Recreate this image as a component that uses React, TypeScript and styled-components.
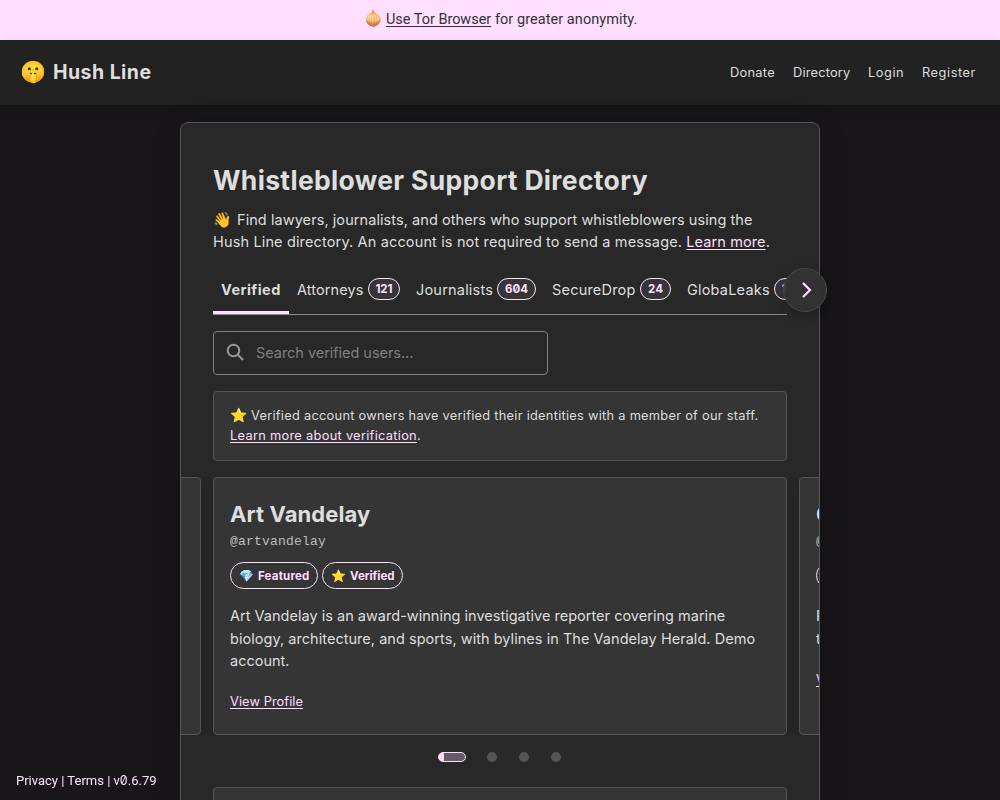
import React from "react";
import styled, { createGlobalStyle } from "styled-components";

const sans = `Inter, Roboto, "Liberation Sans", sans-serif`;

const Global = createGlobalStyle`
  * { box-sizing: border-box; }
  html, body { margin: 0; height: 800px; overflow: hidden; }
  body { background: #181619; color: #dedede; font-family: ${sans}; font-size: 14.5px; font-feature-settings: "zero"; }
  h1, h2, p { margin: 0; }
`;

const Page = styled.div`
  display: flex;
  flex-direction: column;
  height: 800px;
  overflow: hidden;
`;

const T = styled.span<{ $ls?: number; $w?: number }>`
  white-space: pre;
  letter-spacing: ${(p) => p.$ls ?? 0}px;
  ${(p) => (p.$w ? `display: inline-block; width: ${p.$w}px;` : "")}
`;

const Link = styled.a`
  color: #ffdfff;
  text-decoration: underline;
  text-decoration-thickness: 1px;
  text-underline-offset: 2px;
`;

const Banner = styled.div`
  height: 40px;
  flex: none;
  padding: 0 0 2px 364px;
  display: flex;
  align-items: center;
  background: #ffdfff;
  color: #333;
  font-family: Roboto, sans-serif;
  font-size: 14.5px;
  white-space: pre;
  ${Link} { color: #333; }
`;

const Emoji = styled.span<{ $size: number; $w: number }>`
  display: inline-block;
  width: ${(p) => p.$w}px;
  font-size: ${(p) => p.$size}px;
  line-height: 1;
  letter-spacing: 0;
`;

const Header = styled.header`
  height: 65px;
  flex: none;
  padding: 0 24px 0 20px;
  display: flex;
  align-items: center;
  justify-content: space-between;
  background: #222;
  box-shadow: 0 4px 12px rgba(0, 0, 0, 0.12);
`;

const Logo = styled.div`
  display: flex;
  align-items: center;
  padding-bottom: 2px;
  font-size: 19.5px;
  font-weight: 700;
`;

const Nav = styled.nav`
  display: flex;
  gap: 18px;
  font-size: 12.8px;
`;

const Panel = styled.main`
  width: 640px;
  height: 760px;
  flex: none;
  margin: 17px auto 0;
  padding: 40px 32px 0;
  border: 1px solid #555;
  border-radius: 8px;
  background: #282828;
  box-shadow: 0 4px 24px rgba(0, 0, 0, 0.25);
`;

const Title = styled.h1`
  height: 35px;
  line-height: 35px;
  font-size: 26.5px;
`;

const Intro = styled.p`
  margin-top: 11px;
  line-height: 22.4px;
`;

const TabsWrap = styled.div`
  position: relative;
  margin-top: 11px;
`;

const Tabs = styled.div`
  display: flex;
  height: 50px;
  overflow: hidden;
  border-bottom: 1px solid #888;
`;

const Tab = styled.div<{ $active?: boolean }>`
  flex: none;
  display: flex;
  align-items: center;
  padding: 3px 8px 0;
  border-bottom: 3px solid ${(p) => (p.$active ? "#ffdfff" : "transparent")};
  font-weight: ${(p) => (p.$active ? 700 : 400)};
`;

const Count = styled.span<{ $w: number }>`
  flex: none;
  width: ${(p) => p.$w}px;
  height: 22px;
  margin-left: 4px;
  border: 1px solid #ffdfff;
  border-radius: 11px;
  background: #353535;
  color: #ffdfff;
  font-size: 11.5px;
  font-weight: 700;
  line-height: 21px;
  text-align: center;
`;

const Next = styled.button`
  position: absolute;
  right: -40px;
  top: 3px;
  width: 44px;
  height: 44px;
  padding: 0;
  display: grid;
  place-items: center;
  border: 1px solid #484848;
  border-radius: 50%;
  background: rgba(51, 51, 51, 0.95);
  box-shadow: 0 4px 12px rgba(0, 0, 0, 0.2);
`;

const Search = styled.div`
  width: 335px;
  height: 44px;
  margin-top: 16px;
  padding-left: 12px;
  display: flex;
  align-items: center;
  gap: 11px;
  border: 1px solid #808080;
  border-radius: 4px;
  color: #808080;
`;

const Box = styled.div`
  border: 1px solid #555;
  border-radius: 4px;
  background: #353535;
`;

const Notice = styled(Box)`
  height: 70px;
  margin-top: 16px;
  padding: 14px 16px;
  font-size: 12.8px;
  line-height: 20.5px;
`;

const Slides = styled.div`
  display: flex;
  gap: 12px;
  margin: 16px -32px 0;
  overflow: hidden;
  justify-content: center;
`;

const Slide = styled(Box)`
  flex: none;
  width: 574px;
  height: 258px;
  padding: 21px 16px 0;
  box-shadow: 0 4px 16px rgba(0, 0, 0, 0.15);
`;

const Name = styled.h2`
  font-size: 22px;
  line-height: 31px;
`;

const Handle = styled.div`
  margin-top: 2px;
  font: 13px/20px "Liberation Mono", monospace;
  letter-spacing: 0.2px;
  color: #bdbdbd;
`;

const Badges = styled.div`
  display: flex;
  gap: 4px;
  margin-top: 10px;
`;

const Badge = styled.span<{ $w: number }>`
  width: ${(p) => p.$w}px;
  height: 27px;
  padding: 1px 0 0 8px;
  display: flex;
  align-items: center;
  border: 1px solid #ffdfff;
  border-radius: 14px;
  color: #ffdfff;
  font-size: 11.5px;
  font-weight: 700;
`;

const Bio = styled.p`
  margin-top: 16.3px;
  line-height: 22.4px;
`;

const Profile = styled.div`
  margin-top: 19.7px;
  font-size: 12.8px;
  line-height: 20px;
`;

const Dots = styled.div`
  display: flex;
  align-items: center;
  gap: 22px;
  height: 10px;
  margin: 17px 0 25px 225px;
`;

const Dot = styled.span`
  width: 10px;
  height: 10px;
  border-radius: 50%;
  background: #555;
`;

const Progress = styled.span`
  width: 28px;
  height: 10px;
  margin-right: -1px;
  border: 1px solid #ffdfff;
  border-radius: 5px;
  background: linear-gradient(90deg, #ffdfff 5px, #655a65 5px);
`;

const Listing = styled(Box)`
  height: 200px;
`;

const Footer = styled.footer`
  position: fixed;
  left: 16px;
  top: 771px;
  font-family: Roboto, sans-serif;
  font-size: 13px;
  line-height: 20px;
  color: #ffdfff;
`;

const Zero = styled.span`
  font-family: Inter, sans-serif;
  font-size: 12.5px;
`;

const tabs = [
  { label: "Attorneys", w: 67, ls: 0.1, count: "121", cw: 32 },
  { label: "Journalists", w: 77, ls: 0.2, count: "604", cw: 39 },
  { label: "SecureDrop", w: 84, ls: 0.2, count: "24", cw: 31 },
  { label: "GlobaLeaks", w: 83, ls: 0.2, count: "117", cw: 32 },
];

export default function App() {
  return (
    <>
      <Global />
      <Page>
        <Banner>
          <Emoji $size={15} $w={22}>🧅</Emoji>
          <Link><T $ls={-0.03}>Use Tor Browser</T></Link>
          <T $ls={0.06}> for greater anonymity.</T>
        </Banner>
        <Header>
          <Logo><Emoji $size={21} $w={33}>🤫</Emoji><T $ls={0.45}>Hush Line</T></Logo>
          <Nav>
            <T $ls={0.3} $w={45}>Donate</T>
            <T $ls={0.2} $w={57}>Directory</T>
            <T $ls={0.55} $w={36}>Login</T>
            <T $ls={0.55} $w={54}>Register</T>
          </Nav>
        </Header>
        <Panel>
          <Title><T $ls={0.32}>Whistleblower Support Directory</T></Title>
          <Intro>
            <Emoji $size={15} $w={24}>👋</Emoji>
            <T $ls={0.07}>Find lawyers, journalists, and others who support whistleblowers using the</T>
            <br />
            <T $ls={0.145}>Hush Line directory. An account is not required to send a message. </T>
            <Link><T $ls={0.1}>Learn more</T></Link>.
          </Intro>
          <TabsWrap>
            <Tabs>
              <Tab $active><T $ls={0.45} $w={60}>Verified</T></Tab>
              {tabs.map((t) => (
                <Tab key={t.label}><T $ls={t.ls} $w={t.w}>{t.label}</T><Count $w={t.cw}>{t.count}</Count></Tab>
              ))}
            </Tabs>
            <Next>
              <svg width="20" height="20" viewBox="0 0 20 20" fill="none" stroke="#ffdfff" strokeWidth="2.2">
                <path d="M8 3l7 7-7 7" />
              </svg>
            </Next>
          </TabsWrap>
          <Search>
            <svg width="19" height="19" viewBox="0 0 19 19" fill="none" stroke="#999" strokeWidth="2">
              <circle cx="7.5" cy="7.5" r="5.8" />
              <path d="M11.5 11.5l5.5 5.5" />
            </svg>
            <T $ls={-0.04}>Search verified users...</T>
          </Search>
          <Notice>
            <Emoji $size={14} $w={21}>⭐</Emoji>
            <T $ls={0.275}>Verified account owners have verified their identities with a member of our staff.</T>
            <br />
            <Link><T $ls={0.3}>Learn more about verification</T></Link>.
          </Notice>
          <Slides>
            <Slide />
            <Slide>
              <Name><T $ls={0.1}>Art Vandelay</T></Name>
              <Handle>@artvandelay</Handle>
              <Badges>
                <Badge $w={88}><Emoji $size={12} $w={19}>💎</Emoji><T $ls={0.2}>Featured</T></Badge>
                <Badge $w={81}><Emoji $size={12} $w={19}>⭐</Emoji><T>Verified</T></Badge>
              </Badges>
              <Bio>
                <T $ls={0.015}>Art Vandelay is an award-winning investigative reporter covering marine</T><br />
                <T $ls={0.04}>biology, architecture, and sports, with bylines in The Vandelay Herald. Demo</T><br />
                <T>account.</T>
              </Bio>
              <Profile><Link><T $ls={0.08}>View Profile</T></Link></Profile>
            </Slide>
            <Slide>
              <Name>G</Name>
              <Handle>@</Handle>
              <Badges><Badge $w={88} /></Badges>
              <Bio>P<br />t</Bio>
              <Profile><Link>View Profile</Link></Profile>
            </Slide>
          </Slides>
          <Dots><Progress /><Dot /><Dot /><Dot /></Dots>
          <Listing />
        </Panel>
        <Footer><T>Privacy | Terms | v<Zero>0</Zero>.6.79</T></Footer>
      </Page>
    </>
  );
}
